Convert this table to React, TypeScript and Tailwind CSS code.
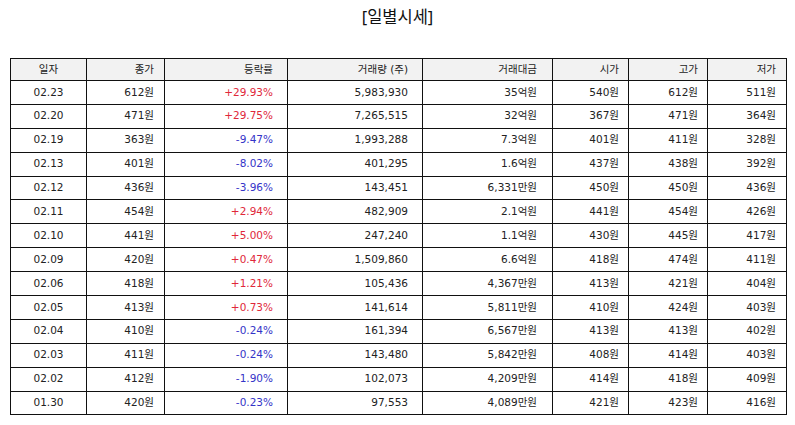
const rows: [string, string, string, string, string, string, string, string][] = [
  ["02.23", "612원", "+29.93%", "5,983,930", "35억원", "540원", "612원", "511원"],
  ["02.20", "471원", "+29.75%", "7,265,515", "32억원", "367원", "471원", "364원"],
  ["02.19", "363원", "-9.47%", "1,993,288", "7.3억원", "401원", "411원", "328원"],
  ["02.13", "401원", "-8.02%", "401,295", "1.6억원", "437원", "438원", "392원"],
  ["02.12", "436원", "-3.96%", "143,451", "6,331만원", "450원", "450원", "436원"],
  ["02.11", "454원", "+2.94%", "482,909", "2.1억원", "441원", "454원", "426원"],
  ["02.10", "441원", "+5.00%", "247,240", "1.1억원", "430원", "445원", "417원"],
  ["02.09", "420원", "+0.47%", "1,509,860", "6.6억원", "418원", "474원", "411원"],
  ["02.06", "418원", "+1.21%", "105,436", "4,367만원", "413원", "421원", "404원"],
  ["02.05", "413원", "+0.73%", "141,614", "5,811만원", "410원", "424원", "403원"],
  ["02.04", "410원", "-0.24%", "161,394", "6,567만원", "413원", "413원", "402원"],
  ["02.03", "411원", "-0.24%", "143,480", "5,842만원", "408원", "414원", "403원"],
  ["02.02", "412원", "-1.90%", "102,073", "4,209만원", "414원", "418원", "409원"],
  ["01.30", "420원", "-0.23%", "97,553", "4,089만원", "421원", "423원", "416원"],
];

const headers = ["일자", "종가", "등락률", "거래량 (주)", "거래대금", "시가", "고가", "저가"];

// right padding per column, read off the reference
const pads = ["px-[8px]", "pr-[10px]", "pr-[14px]", "pr-[14px]", "pr-[15px]", "pr-[9px]", "pr-[9px]", "pr-[10px]"];

export default function App() {
  return (
    <div
      className="w-[795px] h-[425px] bg-white text-[#222] pt-[4px]"
      style={{ fontFamily: '"DejaVu Sans", "Noto Sans CJK KR", sans-serif' }}
    >
      <h1
        className="text-center text-[16.5px] leading-[26px] text-[#111]"
        style={{ fontFamily: '"Noto Sans", "Noto Sans CJK KR", sans-serif' }}
      >
        [일별시세]
      </h1>
      <table className="mt-[28px] ml-[10px] w-[776px] table-fixed border-collapse text-[10.5px]">
        <colgroup>
          <col className="w-[76px]" />
          <col className="w-[78px]" />
          <col className="w-[123px]" />
          <col className="w-[135px]" />
          <col className="w-[130px]" />
          <col className="w-[76px]" />
          <col className="w-[79px]" />
          <col className="w-[79px]" />
        </colgroup>
        <thead>
          <tr className="h-[22px] bg-[#f2f2f2]">
            {headers.map((h, i) => (
              <th
                key={h}
                className={`border-[1.5px] border-[#111] font-normal ${pads[i]} ${i === 0 ? "text-center" : "text-right"}`}
              >
                {h}
              </th>
            ))}
          </tr>
        </thead>
        <tbody>
          {rows.map((r) => (
            <tr key={r[0]} className="h-[23.9px]">
              {r.map((c, i) => (
                <td
                  key={i}
                  className={`border-[1.5px] border-[#111] ${pads[i]} ${i === 0 ? "text-center" : "text-right"} ${
                    i === 2 ? (c.startsWith("+") ? "text-[#e0283a]" : "text-[#3434c8]") : ""
                  }`}
                >
                  {c}
                </td>
              ))}
            </tr>
          ))}
        </tbody>
      </table>
    </div>
  );
}
